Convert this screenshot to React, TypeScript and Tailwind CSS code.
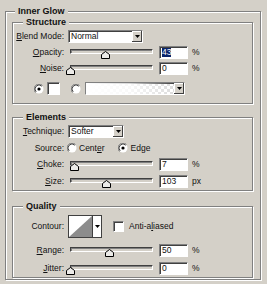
import type { ReactNode } from 'react';

const FACE = 'bg-[#d4d0c8]';
const SUNKEN =
  'border border-t-[#808080] border-l-[#808080] border-b-white border-r-white shadow-[inset_1px_1px_0_#404040]';
const RAISED = 'bg-[#d4d0c8] shadow-[inset_-1px_-1px_0_#404040,inset_1px_1px_0_#fff]';

function Arrow() {
  return (
    <svg width="5" height="3" viewBox="0 0 5 3">
      <path d="M0 0H5L2.5 3Z" fill="#000" />
    </svg>
  );
}

function DropButton({ h = 11 }: { h?: number }) {
  return (
    <div className={`flex w-[10px] items-center justify-center ${RAISED} ${h === 11 ? 'h-[11px]' : 'h-[12px]'}`}>
      <Arrow />
    </div>
  );
}

function Select({ value, w }: { value: string; w: string }) {
  return (
    <div className={`flex h-[13px] items-center bg-white ${SUNKEN} ${w}`}>
      <span className="flex-1 pl-[2px] leading-none">{value}</span>
      <DropButton />
    </div>
  );
}

function Radio({ checked }: { checked?: boolean }) {
  return (
    <svg width="10" height="10" viewBox="0 0 10 10">
      <circle cx="5" cy="5" r="4.5" fill="#fff" />
      <path d="M8.5 1.5A4.5 4.5 0 0 0 1.5 8.5" stroke="#808080" fill="none" />
      <path d="M7.8 2.2A3.7 3.7 0 0 0 2.2 7.8" stroke="#404040" fill="none" />
      {checked && <circle cx="5" cy="5" r="1.6" fill="#000" />}
    </svg>
  );
}

function Thumb() {
  return (
    <svg width="9" height="8" viewBox="0 0 9 8">
      <path d="M0.5 7.5V3.5L4.5 0.5L8.5 3.5V7.5Z" fill="#ecebe8" stroke="#000" />
    </svg>
  );
}

function Label({ children }: { children: ReactNode }) {
  return <span className="w-[51px] shrink-0 text-right leading-none">{children}</span>;
}

function SliderRow({
  label,
  pct,
  value,
  unit,
  selected,
}: {
  label: ReactNode;
  pct: number;
  value: string;
  unit: string;
  selected?: boolean;
}) {
  return (
    <div className="flex h-[13px] items-center">
      <Label>{label}</Label>
      <div className="relative ml-[4px] h-[13px] w-[87px]">
        <div className="ml-[2px] mt-[3px] h-[5px] w-[83px] border border-t-[#404040] border-l-[#404040] border-b-white border-r-white bg-[#d4d0c8] shadow-[inset_1px_1px_0_#808080]" />
        <div className="absolute top-[5px]" style={{ left: 2 + (pct / 100) * 83 - 4.5 }}>
          <Thumb />
        </div>
      </div>
      <div className={`ml-[4px] flex h-[13px] w-[29px] items-center bg-white pl-[2px] ${SUNKEN}`}>
        <span className={`leading-none ${selected ? 'bg-[#0a246a] text-white' : ''}`}>{value}</span>
      </div>
      <span className="ml-[4px] leading-none">{unit}</span>
    </div>
  );
}

function Group({ title, className, children }: { title: string; className?: string; children: ReactNode }) {
  return (
    <fieldset
      className={`m-0 min-w-0 border border-[#808080] p-0 shadow-[inset_1px_1px_0_#fff,1px_1px_0_#fff] ${className ?? ''}`}
    >
      <legend className={`ml-[10px] px-[3px] text-[9px] font-bold leading-[11px] ${FACE}`}>{title}</legend>
      {children}
    </fieldset>
  );
}

const U = ({ children }: { children: ReactNode }) => <span className="underline underline-offset-1">{children}</span>;

export default function App() {
  return (
    <div
      className={`h-[284px] w-[267px] overflow-hidden pl-[5px] pt-[6px] text-[8.5px] text-[#111] ${FACE}`}
      style={{ fontFamily: '"Liberation Sans", Arial, sans-serif' }}
    >
      <fieldset className="m-0 w-[256px] min-w-0 border border-[#808080] pb-[1px] pl-[6px] pr-[7px] pt-0 shadow-[inset_1px_1px_0_#fff,1px_1px_0_#fff]">
        <legend className={`ml-[3px] px-[3px] text-[9px] font-bold leading-[11px] ${FACE}`}>Inner Glow</legend>

        <Group title="Structure">
          <div className="flex flex-col pb-[8px] pt-[2px]">
            <div className="flex h-[13px] items-center">
              <Label>
                <U>B</U>lend Mode:
              </Label>
              <div className="ml-[4px]">
                <Select value="Normal" w="w-[75px]" />
              </div>
            </div>
            <div className="mt-[3px]">
              <SliderRow label={<><U>O</U>pacity:</>} pct={43} value="43" unit="%" selected />
            </div>
            <div className="mt-[3px]">
              <SliderRow label={<><U>N</U>oise:</>} pct={0} value="0" unit="%" />
            </div>
            <div className="mt-[7px] flex h-[13px] items-center">
              <div className="ml-[21px]">
                <Radio checked />
              </div>
              <div className={`ml-[3px] h-[13px] w-[13px] bg-white ${SUNKEN}`} />
              <div className="ml-[11px]">
                <Radio />
              </div>
              <div className={`ml-[4px] flex h-[13px] w-[100px] items-center ${SUNKEN} bg-[conic-gradient(#dcdcdc_25%,#fff_0_50%,#dcdcdc_0_75%,#fff_0)] bg-[length:6px_6px]`}>
                <div className="h-full flex-1 bg-linear-to-r from-white via-white/80 to-white/0" />
                <DropButton />
              </div>
            </div>
          </div>
        </Group>

        <Group title="Elements" className="mt-[8px]">
          <div className="flex flex-col pb-[2px] pt-[2px]">
            <div className="flex h-[13px] items-center">
              <Label>
                <U>T</U>echnique:
              </Label>
              <div className="ml-[4px]">
                <Select value="Softer" w="w-[56px]" />
              </div>
            </div>
            <div className="mt-[4px] flex h-[12px] items-center">
              <Label>Source:</Label>
              <div className="ml-[3px]">
                <Radio />
              </div>
              <span className="ml-[2px] leading-none">
                Cent<U>e</U>r
              </span>
              <div className="ml-[13px]">
                <Radio checked />
              </div>
              <span className="ml-[3px] leading-none">Edge</span>
            </div>
            <div className="mt-[4px]">
              <SliderRow label={<><U>C</U>hoke:</>} pct={6} value="7" unit="%" />
            </div>
            <div className="mt-[4px]">
              <SliderRow label={<><U>S</U>ize:</>} pct={44} value="103" unit="px" />
            </div>
          </div>
        </Group>

        <Group title="Quality" className="mt-[10px]">
          <div className="flex flex-col pb-[2px] pt-[3px]">
            <div className="flex h-[23px] items-center">
              <Label>Contour:</Label>
              <div className="ml-[4px] flex h-[23px] w-[34px] border border-[#404040] bg-white">
                <svg width="23" height="21" viewBox="0 0 23 21" className="block">
                  <path d="M0 21L23 0V21Z" fill="#8c8c8c" />
                </svg>
                <div className="flex flex-1 items-center justify-center border-l border-[#404040]">
                  <Arrow />
                </div>
              </div>
              <div className={`ml-[11px] h-[11px] w-[11px] bg-white ${SUNKEN}`} />
              <span className="ml-[5px] leading-none">
                Anti-a<U>l</U>iased
              </span>
            </div>
            <div className="mt-[6px]">
              <SliderRow label={<><U>R</U>ange:</>} pct={47} value="50" unit="%" />
            </div>
            <div className="mt-[5px]">
              <SliderRow label={<><U>J</U>itter:</>} pct={0} value="0" unit="%" />
            </div>
          </div>
        </Group>
      </fieldset>
    </div>
  );
}
